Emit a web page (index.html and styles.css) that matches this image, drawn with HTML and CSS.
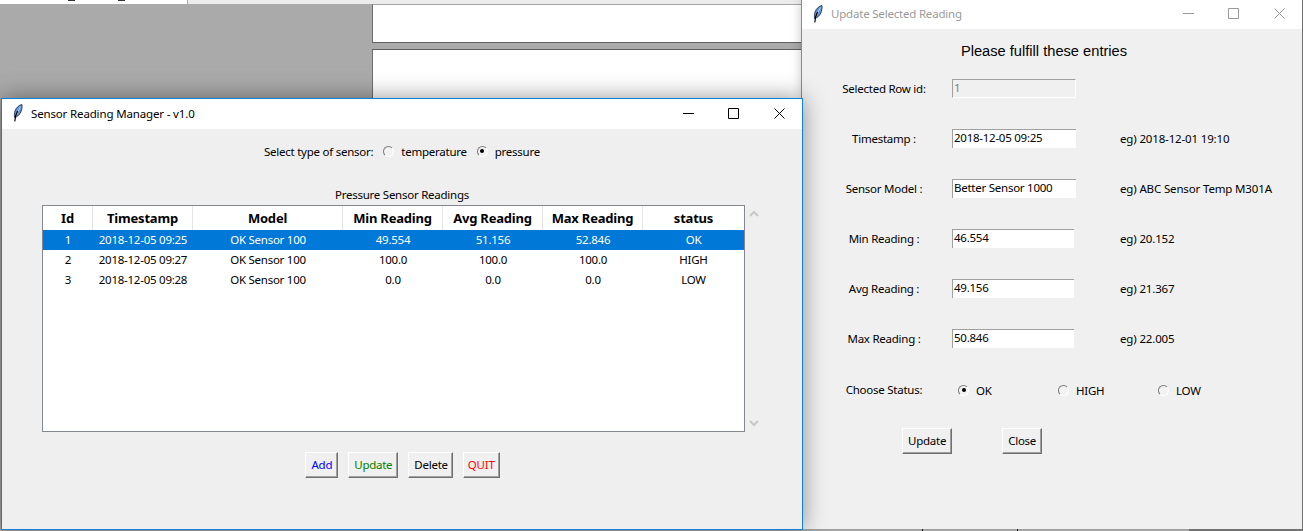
FILE: index.html
```html
<!DOCTYPE html>
<html lang="en">
<head>
<meta charset="utf-8">
<title>Sensor Reading Manager</title>
<link rel="stylesheet" href="styles.css">
</head>
<body>
<svg class="defs" width="0" height="0" aria-hidden="true">
  <symbol id="feather" viewBox="0 0 10 18">
    <path d="M9 .5C6 1 3.2 3.6 2 7 1.3 9 1.2 11.5 1.6 13.5 4 13 6.6 11 7.8 8 8.9 5.4 9.3 2.8 9 .5Z" fill="#5f93d9" stroke="#16233a" stroke-width=".8"/>
    <path d="M7.6 2.6 5 7.4 3.2 11.6" fill="none" stroke="#c9def5" stroke-width=".8"/>
    <path d="M4.6 7 2.6 12 1.8 17.4" fill="none" stroke="#000" stroke-width="1.2"/>
  </symbol>
</svg>

<div class="desktop">
  <div class="backdrop">
    <div class="strip">
      <div class="strip-tab"><i class="tick tick-a"></i><i class="tick tick-b"></i></div>
    </div>
    <div class="panel panel-a"></div>
    <div class="panel panel-b"></div>
  </div>

  <div class="taskline"><i class="notch notch-a"></i><i class="notch notch-b"></i><i class="taskline-dark"></i></div>

  <section class="window update-window">
    <header class="titlebar">
      <svg class="feather"><use href="#feather"/></svg>
      <span class="title-text">Update Selected Reading</span>
      <div class="controls">
        <svg class="ctl" viewBox="0 0 11 11"><path d="M0 5.500H11"/></svg>
        <svg class="ctl" viewBox="0 0 11 11"><path d="M.5 .5H10.500V10.500H.5Z"/></svg>
        <svg class="ctl ctl-close" viewBox="0 0 11 11"><path d="M.5 .5 10.500 10.500M10.500 .5 .5 10.500"/></svg>
      </div>
    </header>
    <div class="client update-client">
      <h1 class="form-title">Please fulfill these entries</h1>
      <div class="form-row">
        <span class="form-label">Selected Row id:</span>
        <input class="entry entry-disabled" value="1" disabled>
      </div>
      <div class="form-row">
        <span class="form-label">Timestamp :</span>
        <input class="entry" value="2018-12-05 09:25">
        <span class="hint">eg) 2018-12-01 19:10</span>
      </div>
      <div class="form-row">
        <span class="form-label">Sensor Model :</span>
        <input class="entry" value="Better Sensor 1000">
        <span class="hint">eg) ABC Sensor Temp M301A</span>
      </div>
      <div class="form-row">
        <span class="form-label">Min Reading :</span>
        <input class="entry entry-narrow" value="46.554">
        <span class="hint">eg) 20.152</span>
      </div>
      <div class="form-row">
        <span class="form-label">Avg Reading :</span>
        <input class="entry entry-narrow" value="49.156">
        <span class="hint">eg) 21.367</span>
      </div>
      <div class="form-row">
        <span class="form-label">Max Reading :</span>
        <input class="entry entry-narrow" value="50.846">
        <span class="hint">eg) 22.005</span>
      </div>
      <div class="form-row status-row">
        <span class="form-label">Choose Status:</span>
        <div class="status-options">
          <span class="radio-item status-item"><i class="radio radio-on"></i>OK</span>
          <span class="radio-item status-item"><i class="radio"></i>HIGH</span>
          <span class="radio-item status-item"><i class="radio"></i>LOW</span>
        </div>
      </div>
      <div class="form-actions">
        <button class="btn">Update</button>
        <button class="btn">Close</button>
      </div>
    </div>
  </section>

  <section class="window main-window">
    <header class="titlebar">
      <svg class="feather"><use href="#feather"/></svg>
      <span class="title-text">Sensor Reading Manager - v1.0</span>
      <div class="controls">
        <svg class="ctl" viewBox="0 0 11 11"><path d="M0 5.500H11"/></svg>
        <svg class="ctl" viewBox="0 0 11 11"><path d="M.5 .5H10.500V10.500H.5Z"/></svg>
        <svg class="ctl ctl-close" viewBox="0 0 11 11"><path d="M.5 .5 10.500 10.500M10.500 .5 .5 10.500"/></svg>
      </div>
    </header>
    <div class="client main-client">
      <div class="sensor-select">
        <span>Select type of sensor:</span>
        <span class="radio-item"><i class="radio"></i>temperature</span>
        <span class="radio-item"><i class="radio radio-on"></i>pressure</span>
      </div>
      <div class="table-caption">Pressure Sensor Readings</div>
      <div class="table-area">
        <div class="table-frame">
          <table class="readings">
            <colgroup>
              <col class="col-id"><col class="col-time"><col class="col-model"><col class="col-num"><col class="col-num"><col class="col-num"><col>
            </colgroup>
            <thead>
              <tr><th>Id</th><th>Timestamp</th><th>Model</th><th>Min Reading</th><th>Avg Reading</th><th>Max Reading</th><th>status</th></tr>
            </thead>
            <tbody>
              <tr class="selected"><td>1</td><td>2018-12-05 09:25</td><td>OK Sensor 100</td><td>49.554</td><td>51.156</td><td>52.846</td><td>OK</td></tr>
              <tr><td>2</td><td>2018-12-05 09:27</td><td>OK Sensor 100</td><td>100.0</td><td>100.0</td><td>100.0</td><td>HIGH</td></tr>
              <tr><td>3</td><td>2018-12-05 09:28</td><td>OK Sensor 100</td><td>0.0</td><td>0.0</td><td>0.0</td><td>LOW</td></tr>
            </tbody>
          </table>
        </div>
        <div class="scrollbar">
          <svg class="chev" viewBox="0 0 10 7"><path d="M1 6 5 2 9 6"/></svg>
          <svg class="chev" viewBox="0 0 10 7"><path d="M1 1 5 5 9 1"/></svg>
        </div>
      </div>
      <div class="actions">
        <button class="btn btn-add">Add</button>
        <button class="btn btn-update">Update</button>
        <button class="btn btn-delete">Delete</button>
        <button class="btn btn-quit">QUIT</button>
      </div>
    </div>
  </section>
</div>
</body>
</html>
```

FILE: styles.css
```css
* { box-sizing: border-box; }
html, body { margin: 0; padding: 0; height: 100%; overflow: hidden; }
body {
  font-family: "Noto Sans", "Open Sans", sans-serif;
  font-size: 11.5px;
  letter-spacing: -.25px;
  color: #000;
  background: #aaaaaa;
}
.defs { position: absolute; }
.desktop { position: relative; width: 1303px; height: 531px; overflow: hidden; background: #aaaaaa; }

/* Application behind the windows */
.backdrop { position: absolute; left: 0; top: 0; width: 802px; height: 531px; }
.strip { height: 4px; background: #ececec; }
.strip-tab { position: relative; width: 188px; height: 4px; background: #fff; border-right: 1px solid #a8a8a8; }
.tick { position: absolute; top: 0; height: 1px; width: 7px; background: #333; }
.tick-a { left: 68px; }
.tick-b { left: 118px; }
.panel { margin-left: 372px; background: #fff; border-left: 1px solid #6e6e6e; }
.panel-a { height: 39px; border-top: 1px solid #a5a5a5; border-bottom: 1px solid #5f5f5f; }
.panel-b { height: 60px; margin-top: 6px; border-top: 1px solid #5f5f5f; }

.taskline { position: absolute; left: 801px; top: 529px; width: 502px; height: 2px; background: #b4b4b4; }
.notch { position: absolute; top: 0; width: 1px; height: 2px; background: #111; }
.notch-a { left: 121px; }
.notch-b { left: 216px; }
.taskline-dark { position: absolute; left: 388px; right: 0; top: 0; height: 2px; background: #7d7d7d; }

/* Windows */
.window { position: absolute; display: flex; flex-direction: column; }
.main-window {
  left: 1px; top: 98px; width: 802px; height: 432px;
  border: 1px solid #0f7fd8;
  box-shadow: 0 0 22px rgba(0, 0, 0, .42);
}
.update-window {
  left: 801px; top: 0; width: 502px; height: 529px;
  border-left: 1px solid #8a8a8a;
  border-right: 1px solid #707070;
  box-shadow: 0 0 10px rgba(0, 0, 0, .22);
}
.titlebar { display: flex; align-items: center; height: 30px; flex: none; background: #fff; padding: 0 0 2px 11px; }
.update-window .titlebar { height: 29px; color: #9a9a9a; }
.feather { width: 10px; height: 18px; flex: none; }
.title-text { margin-left: 8px; letter-spacing: -.15px; }
.update-window .title-text { letter-spacing: -.2px; }
.controls { margin-left: auto; display: flex; align-items: center; gap: 34px; padding-right: 17px; }
.ctl { width: 11px; height: 11px; fill: none; stroke: #000; stroke-width: 1; }
.ctl-close { margin-left: 1px; }
.update-window .ctl { stroke: #999; }

.client { flex: 1; background: #efefef; }

/* Main window */
.sensor-select { display: flex; justify-content: center; align-items: center; height: 18px; margin-top: 13px; gap: 10px; }
.radio-item { display: inline-flex; align-items: center; gap: 7px; }
.radio {
  display: inline-flex; align-items: center; justify-content: center;
  width: 11px; height: 11px; border-radius: 50%; flex: none;
  border: 1px solid; border-color: #7a7a7a #fff #fff #7a7a7a;
  background: #f2f2f2;
}
.radio-on::after { content: ""; width: 4px; height: 4px; border-radius: 50%; background: #000; }
.table-caption { text-align: center; height: 18px; line-height: 18px; margin-top: 26px; }
.table-area { display: flex; margin-top: 1px; margin-left: 40px; }
.table-frame { width: 703px; height: 227px; background: #fff; border: 1px solid #828790; }
.readings { width: 701px; border-collapse: separate; border-spacing: 0; table-layout: fixed; }
.col-id { width: 50px; }
.col-time { width: 100px; }
.col-model { width: 150px; }
.col-num { width: 100px; }
.readings th {
  height: 24px; padding: 0; font-size: 13px; font-weight: 700; letter-spacing: -.2px; text-align: center;
  border-right: 1px solid #e5e5e5;
}
.readings th:last-child { border-right: 0; }
.readings td { height: 20px; padding: 0 0 2px; text-align: center; }
.selected td { background: #0078d7; color: #fff; }
.scrollbar { display: flex; flex-direction: column; justify-content: space-between; width: 18px; height: 227px; padding: 5px 0 5px 4px; }
.chev { width: 10px; height: 7px; fill: none; stroke: #c8c8c8; stroke-width: 2; }
.actions { display: flex; justify-content: center; gap: 10px; margin-top: 20px; padding-left: 1px; }
.btn {
  height: 26px; padding: 0 5px 1px; font: inherit; letter-spacing: inherit; color: #000; background: #f0f0f0;
  border: 1px solid; border-color: #fff #6f6f6f #6f6f6f #fff;
  box-shadow: inset -1px -1px 0 #a0a0a0;
}
.btn-add { color: #0000ff; }
.btn-update { color: #008000; }
.btn-delete { padding: 0 4px 1px 5px; }
.btn-quit { color: #ff0000; padding: 0 4px 1px; }

/* Update window */
.update-client { background: #f0f0f0; padding-top: 13px; }
.form-title { margin: 0 0 3px; padding-right: 16px; text-align: center; letter-spacing: 0; font: 400 14.67px/18px "Liberation Sans", Arial, sans-serif; }
.form-row { display: flex; align-items: center; height: 50px; padding-left: 33px; }
.status-row { padding-top: 2px; }
.form-label { width: 98px; margin-right: 19px; padding-top: 1px; text-align: center; flex: none; white-space: nowrap; }
.entry {
  width: 124px; height: 19px; padding: 0 0 2px 1px; margin: 0; flex: none;
  font: inherit; letter-spacing: inherit; color: #000; background: #fff;
  border-style: solid; border-width: 1px 0 0 1px; border-color: #a0a0a0;
  outline: 0;
}
.entry-narrow { width: 122px; margin-right: 2px; }
.entry-disabled { background: #f0f0f0; color: #808080; border-width: 1px; border-color: #a0a0a0 #fff #fff #a0a0a0; }
.hint { margin-left: 44px; padding-top: 1px; letter-spacing: -.15px; white-space: nowrap; }
.status-options { display: flex; padding-left: 6px; }
.status-item { width: 100px; margin-top: 2px; }
.form-actions { display: flex; gap: 50px; padding-left: 100px; margin-top: 15px; }
```
